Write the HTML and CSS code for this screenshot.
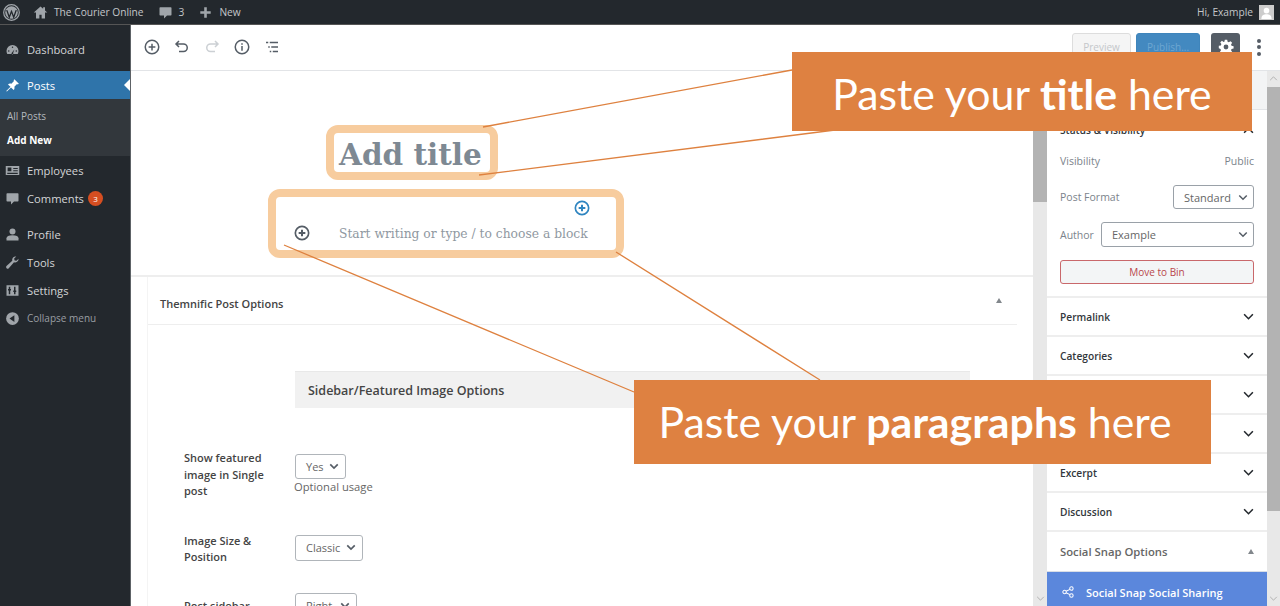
FILE: index.html
```html
<!DOCTYPE html>
<html lang="en">

<head>
    <meta charset="UTF-8">
    <meta name="viewport" content="width=device-width, initial-scale=1.0">
    <title>Add New Post</title>
    <link rel="stylesheet" href="styles.css">
</head>

<body>
    <div class="adminbar">
        <svg class="wp-logo" viewBox="0 0 20 20"><circle cx="10" cy="10" r="9.2" fill="none" stroke="#a0a5aa" stroke-width="1.4"/><circle cx="10" cy="10" r="7.4" fill="#a0a5aa"/><path d="M4.4 7l3 8.6L10 8.6l2.6 7 3-8.6" fill="none" stroke="#23282d" stroke-width="1.5"/><path d="M3 6.6h4.6M8 6.6h4.4M13.2 6.6h3" stroke="#a0a5aa" stroke-width="1"/></svg>
        <svg class="bar-icon home-icon" viewBox="0 0 20 20"><path d="M10 2L1 10h3v8h4.5v-5h3v5H16v-8h3l-3-2.7V3h-2.5v2.1z" fill="#a0a5aa"/></svg>
        <span class="bar-text site-name">The Courier Online</span>
        <svg class="bar-icon" viewBox="0 0 20 20"><path d="M3 3h14a1 1 0 0 1 1 1v9a1 1 0 0 1-1 1h-5l-4 4v-4H3a1 1 0 0 1-1-1V4a1 1 0 0 1 1-1z" fill="#a0a5aa"/></svg>
        <span class="bar-text count">3</span>
        <svg class="bar-icon plus-icon" viewBox="0 0 20 20"><path d="M8 2h4v6h6v4h-6v6H8v-6H2V8h6z" fill="#a0a5aa"/></svg>
        <span class="bar-text">New</span>
        <span class="bar-text howdy">Hi, Example</span>
        <div class="avatar">
            <svg viewBox="0 0 14 14"><circle cx="7" cy="5" r="3" fill="#fff"/><path d="M1.5 14c0-4 2.500-5 5.500-5s5.500 1 5.500 5z" fill="#fff"/></svg>
        </div>
    </div>

    <div class="wrap">
        <div class="sidebar">
            <div class="menu-item">
                <svg class="menu-icon" viewBox="0 0 20 20"><path d="M10 4a8 8 0 0 0-8 8c0 1.500.4 2.800 1 4h14c.6-1.200 1-2.500 1-4a8 8 0 0 0-8-8zm0 2a1 1 0 1 1 0 2 1 1 0 0 1 0-2zM5 11a1 1 0 1 1 0 2 1 1 0 0 1 0-2zm10 0a1 1 0 1 1 0 2 1 1 0 0 1 0-2zm-4.200 3.500a1.200 1.200 0 1 1-1.700-.2l3.400-4.300z" fill="#a0a5aa" fill-rule="evenodd"/></svg>
                <span>Dashboard</span>
            </div>
            <div class="menu-item current">
                <svg class="menu-icon" viewBox="0 0 20 20"><path d="M12.500 1.500l6 6-1.500 1-1-.5-3.500 3.500c.5 2 0 3.500-1 4.500L8 12.500l-5.500 5.500-.8-.7L7.300 11.700 4 8.500c1-1 2.500-1.500 4.500-1L12 4l-.5-1z" fill="#fff"/></svg>
                <span>Posts</span>
            </div>
            <div class="submenu">
                <div class="sub-item">All Posts</div>
                <div class="sub-item active">Add New</div>
            </div>
            <div class="menu-item">
                <svg class="menu-icon" viewBox="0 0 20 20"><path d="M1 4h18v12H1zm2.500 2v5h5V6zM11 6.500v1.500h6V6.500zm0 3v1.500h6V9.500zM3 13v1.500h14V13z" fill="#a0a5aa" fill-rule="evenodd"/></svg>
                <span>Employees</span>
            </div>
            <div class="menu-item">
                <svg class="menu-icon" viewBox="0 0 20 20"><path d="M3 3h14a1 1 0 0 1 1 1v9a1 1 0 0 1-1 1h-5l-4 4v-4H3a1 1 0 0 1-1-1V4a1 1 0 0 1 1-1z" fill="#a0a5aa"/></svg>
                <span>Comments</span>
                <b class="badge">3</b>
            </div>
            <div class="menu-item spaced">
                <svg class="menu-icon" viewBox="0 0 20 20"><circle cx="10" cy="6" r="4" fill="#a0a5aa"/><path d="M2 18v-3c0-2.500 3-4 8-4s8 1.500 8 4v3z" fill="#a0a5aa"/></svg>
                <span>Profile</span>
            </div>
            <div class="menu-item">
                <svg class="menu-icon" viewBox="0 0 20 20"><path d="M18 5.500a4.500 4.500 0 0 1-6 4.200L5 17.500a2 2 0 0 1-3-2.800l7.700-7.100A4.500 4.500 0 0 1 15 2l-2.800 2.700.6 2.500 2.500.6L18 5z" fill="#a0a5aa"/></svg>
                <span>Tools</span>
            </div>
            <div class="menu-item">
                <svg class="menu-icon" viewBox="0 0 20 20"><path d="M2 3h16v14H2zm3 2v3H4v2h1v5h2v-5h1V8H7V5zm7 0v5h-1v2h1v3h2v-3h1v-2h-1V5z" fill="#a0a5aa" fill-rule="evenodd"/></svg>
                <span>Settings</span>
            </div>
            <div class="menu-item collapse">
                <svg class="menu-icon" viewBox="0 0 20 20"><circle cx="10" cy="10" r="8.500" fill="#a0a5aa"/><path d="M12.500 5.500v9L6 10z" fill="#23282d"/></svg>
                <span>Collapse menu</span>
            </div>
        </div>

        <div class="main">
            <div class="toolbar">
                <svg class="tool" viewBox="0 0 24 24"><circle cx="12" cy="12" r="9" fill="none" stroke="#555d66" stroke-width="2"/><path d="M12 7.500v9M7.500 12h9" stroke="#555d66" stroke-width="2"/></svg>
                <svg class="tool" viewBox="0 0 24 24"><path d="M8 4L4 8l4 4M4 8h10a5 5 0 0 1 0 10H8" fill="none" stroke="#555d66" stroke-width="2"/></svg>
                <svg class="tool" viewBox="0 0 24 24"><path d="M16 4l4 4-4 4M20 8H10a5 5 0 0 0 0 10h6" fill="none" stroke="#ccd0d4" stroke-width="2"/></svg>
                <svg class="tool" viewBox="0 0 24 24"><circle cx="12" cy="12" r="9" fill="none" stroke="#555d66" stroke-width="2"/><path d="M12 10.500V17M12 7v2" stroke="#555d66" stroke-width="2"/></svg>
                <svg class="tool" viewBox="0 0 24 24"><path d="M4 6h3M9 6h11M7 12h2M11 12h9M9 18h2M13 18h7" fill="none" stroke="#555d66" stroke-width="2"/></svg>
                <div class="toolbar-right">
                    <button class="btn-preview">Preview</button>
                    <button class="btn-publish">Publish...</button>
                    <div class="btn-gear">
                        <svg viewBox="0 0 20 20"><path d="M8.500 1h3l.5 2.500 1.500.6 2.100-1.400 2.100 2.100-1.400 2.100.6 1.600 2.600.5v3l-2.600.5-.6 1.500 1.400 2.100-2.100 2.100-2.100-1.400-1.500.6-.5 2.500h-3l-.5-2.500-1.500-.6-2.100 1.400-2.100-2.100 1.400-2.100-.6-1.500L1 11.500v-3l2.600-.5.600-1.600-1.400-2.100 2.100-2.100 2.100 1.400L8 3.500zM10 7a3 3 0 1 0 0 6 3 3 0 0 0 0-6z" fill="#fff" fill-rule="evenodd"/></svg>
                    </div>
                    <div class="dots"><i></i><i></i><i></i></div>
                </div>
            </div>

            <div class="work">
                <div class="editor">
                    <h1 class="post-title">Add title</h1>
                    <div class="inserter-row">
                        <svg class="plus-blue" viewBox="0 0 24 24"><circle cx="12" cy="12" r="10" fill="none" stroke="#2f85c0" stroke-width="2.500"/><path d="M12 7v10M7 12h10" stroke="#2f85c0" stroke-width="3"/></svg>
                    </div>
                    <div class="para-row">
                        <svg class="plus-dark" viewBox="0 0 24 24"><circle cx="12" cy="12" r="10" fill="none" stroke="#555d66" stroke-width="2.500"/><path d="M12 7v10M7 12h10" stroke="#555d66" stroke-width="3"/></svg>
                        <span>Start writing or type / to choose a block</span>
                    </div>

                    <div class="metabox-area">
                        <div class="metabox">
                            <div class="metabox-head">
                                <span>Themnific Post Options</span>
                                <i class="tri"></i>
                            </div>
                            <div class="section-title">Sidebar/Featured Image Options</div>
                            <div class="opt-row first">
                                <label>Show featured image in Single post</label>
                                <div>
                                    <div class="small-select yes">Yes <svg viewBox="0 0 12 8"><path d="M1.500 1.500L6 6l4.500-4.500" fill="none" stroke="#555d66" stroke-width="2"/></svg></div>
                                    <div class="hint">Optional usage</div>
                                </div>
                            </div>
                            <div class="opt-row second">
                                <label>Image Size &amp; Position</label>
                                <div class="small-select classic">Classic <svg viewBox="0 0 12 8"><path d="M1.500 1.500L6 6l4.500-4.500" fill="none" stroke="#555d66" stroke-width="2"/></svg></div>
                            </div>
                            <div class="opt-row third">
                                <label>Post sidebar</label>
                                <div class="small-select right">Right <svg viewBox="0 0 12 8"><path d="M1.500 1.500L6 6l4.500-4.500" fill="none" stroke="#555d66" stroke-width="2"/></svg></div>
                            </div>
                        </div>
                    </div>
                </div>

                <div class="scrollbar">
                    <div class="sb-thumb editor-thumb"></div>
                    <svg class="sb-arrow" viewBox="0 0 10 6"><path d="M1 1l4 4 4-4" fill="none" stroke="#a6a6a6" stroke-width="1"/></svg>
                </div>

                <div class="panel">
                    <div class="panel-tabs"></div>
                    <div class="panel-section status">
                        <div class="panel-row-head">
                            <b>Status &amp; Visibility</b>
                            <svg class="chev" viewBox="0 0 12 8"><path d="M1 6.500L6 1.500l5 5" fill="none" stroke="#23282d" stroke-width="1.800"/></svg>
                        </div>
                        <div class="field vis"><span>Visibility</span><span>Public</span></div>
                        <div class="field fmt">
                            <span>Post Format</span>
                            <div class="select std">Standard <svg viewBox="0 0 12 8"><path d="M1.500 1.500L6 6l4.500-4.500" fill="none" stroke="#555d66" stroke-width="1.800"/></svg></div>
                        </div>
                        <div class="field auth">
                            <span>Author</span>
                            <div class="select who">Example <svg viewBox="0 0 12 8"><path d="M1.500 1.500L6 6l4.500-4.500" fill="none" stroke="#555d66" stroke-width="1.800"/></svg></div>
                        </div>
                        <button class="btn-bin">Move to Bin</button>
                    </div>
                    <div class="panel-line"><b>Permalink</b><svg class="chev" viewBox="0 0 12 8"><path d="M1 1.500l5 5 5-5" fill="none" stroke="#23282d" stroke-width="1.800"/></svg></div>
                    <div class="panel-line"><b>Categories</b><svg class="chev" viewBox="0 0 12 8"><path d="M1 1.500l5 5 5-5" fill="none" stroke="#23282d" stroke-width="1.800"/></svg></div>
                    <!-- these two rows have their labels hidden behind the callout -->
                    <div class="panel-line"><b></b><svg class="chev" viewBox="0 0 12 8"><path d="M1 1.500l5 5 5-5" fill="none" stroke="#23282d" stroke-width="1.800"/></svg></div>
                    <div class="panel-line"><b></b><svg class="chev" viewBox="0 0 12 8"><path d="M1 1.500l5 5 5-5" fill="none" stroke="#23282d" stroke-width="1.800"/></svg></div>
                    <div class="panel-line"><b>Excerpt</b><svg class="chev" viewBox="0 0 12 8"><path d="M1 1.500l5 5 5-5" fill="none" stroke="#23282d" stroke-width="1.800"/></svg></div>
                    <div class="panel-line"><b>Discussion</b><svg class="chev" viewBox="0 0 12 8"><path d="M1 1.500l5 5 5-5" fill="none" stroke="#23282d" stroke-width="1.800"/></svg></div>
                    <div class="panel-line snap"><b>Social Snap Options</b><i class="tri"></i></div>
                    <div class="panel-share">
                        <svg viewBox="0 0 14 14"><circle cx="3" cy="7" r="2" fill="none" stroke="#fff" stroke-width="1.200"/><circle cx="11" cy="3" r="2" fill="none" stroke="#fff" stroke-width="1.200"/><circle cx="11" cy="11" r="2" fill="none" stroke="#fff" stroke-width="1.200"/><path d="M4.800 6.100l4.400-2.200M4.800 7.900l4.400 2.200" stroke="#fff" stroke-width="1.200"/></svg>
                        <span>Social Snap Social Sharing</span>
                    </div>
                </div>

                <div class="scrollbar outer">
                    <svg class="sb-arrow up" viewBox="0 0 10 6"><path d="M1 5l4-4 4 4" fill="none" stroke="#a6a6a6" stroke-width="1"/></svg>
                    <div class="sb-thumb outer-thumb"></div>
                    <svg class="sb-arrow" viewBox="0 0 10 6"><path d="M1 1l4 4 4-4" fill="none" stroke="#a6a6a6" stroke-width="1"/></svg>
                </div>
            </div>
        </div>
    </div>

    <!-- annotations drawn on top of the screenshot -->
    <div class="mark mark-title"></div>
    <div class="mark mark-para"></div>
    <svg class="lines" viewBox="0 0 1280 606">
        <path d="M483 127L792 70M479 175L835 130M284 245L634 392M616 252L820 380" stroke="#de813f" stroke-width="1.300" fill="none"/>
    </svg>
    <div class="callout callout-title">Paste your <b>title</b> here</div>
    <div class="callout callout-para">Paste your <b>paragraphs</b> here</div>
</body>

</html>
```

FILE: styles.css
```css
* {
    margin: 0;
    padding: 0;
    box-sizing: border-box;
    font-family: "Open Sans", Arial, sans-serif;
}

body {
    width: 1280px;
    height: 606px;
    overflow: hidden;
    background-color: #fff;
    display: flex;
    flex-direction: column;
}

/* top bar */
.adminbar {
    height: 25px;
    flex: none;
    background-color: #23282d;
    border-bottom: 1px solid #555;
    display: flex;
    align-items: center;
    padding: 0 6px 0 3px;
}

.wp-logo {
    width: 17px;
    height: 17px;
    margin-right: 13px;
}

.bar-icon {
    width: 15px;
    height: 15px;
    margin-right: 6px;
}

.home-icon {
    margin-right: 6px;
}

.plus-icon {
    width: 13px;
    height: 13px;
    margin-right: 7px;
}

.bar-text {
    color: #c3c6c9;
    font-size: 10.200px;
}

.site-name {
    margin-right: 14px;
}

.count {
    margin-right: 15px;
}

.howdy {
    margin-left: auto;
    margin-right: 6px;
}

.avatar {
    width: 15px;
    height: 15px;
    background-color: #ccc;
    padding: 1px;
    display: flex;
}

/* left menu */
.wrap {
    flex: 1;
    display: flex;
    min-height: 0;
}

.sidebar {
    width: 131px;
    flex: none;
    background-color: #23282d;
    border-right: 1px solid #5d6266;
    padding-top: 10px;
}

.menu-item {
    height: 28px;
    display: flex;
    align-items: center;
    padding-left: 5px;
    color: #d3d5d7;
    font-size: 11.200px;
}

.menu-icon {
    width: 15px;
    height: 15px;
    margin-right: 7px;
}

.menu-item.current {
    background-color: #2f74aa;
    color: #fff;
    margin-top: 8px;
    position: relative;
}

.menu-item.current::after {
    content: "";
    position: absolute;
    right: 0;
    top: 8px;
    border: 6px solid transparent;
    border-left: 0;
    border-right-color: #fff;
}

.submenu {
    background-color: #32373c;
    padding: 5px 7px 4px;
}

.sub-item {
    height: 24px;
    line-height: 24px;
    font-size: 10px;
    color: #b4b9be;
}

.sub-item.active {
    color: #fff;
    font-weight: 700;
}

.badge {
    width: 15px;
    height: 15px;
    border-radius: 50%;
    margin-left: 4px;
    background-color: #d54e21;
    color: #fff;
    font-size: 8px;
    font-weight: 400;
    text-align: center;
    line-height: 15px;
}

.menu-item.spaced {
    margin-top: 8px;
}

.menu-item.collapse {
    color: #9a9ea3;
    font-size: 10px;
}

/* editor toolbar */
.main {
    flex: 1;
    display: flex;
    flex-direction: column;
    min-width: 0;
}

.toolbar {
    height: 46px;
    flex: none;
    border-bottom: 1px solid #e2e4e7;
    display: flex;
    align-items: center;
    padding: 0 12px 1px 12px;
    gap: 12px;
}

.tool {
    width: 18px;
    height: 18px;
}

.toolbar-right {
    margin-left: auto;
    display: flex;
    align-items: center;
}

.btn-preview {
    width: 59px;
    height: 28px;
    background-color: #f5f5f5;
    border: 1px solid #ddd;
    border-radius: 3px;
    color: #c4c7ca;
    font-size: 10px;
    margin-right: 5px;
}

.btn-publish {
    width: 64px;
    height: 28px;
    background-color: #4389c0;
    border: 1px solid #3f85bb;
    border-radius: 3px;
    color: #6ea7d2;
    font-size: 10px;
    margin-right: 11px;
}

.btn-gear {
    width: 29px;
    height: 28px;
    background-color: #555d66;
    border-radius: 3px;
    display: flex;
    align-items: center;
    justify-content: center;
}

.btn-gear svg {
    width: 16px;
    height: 16px;
}

.dots {
    width: 4px;
    margin-left: 17px;
    margin-right: 7px;
    display: flex;
    flex-direction: column;
    gap: 2.500px;
}

.dots i {
    width: 4px;
    height: 4px;
    border-radius: 50%;
    background-color: #555d66;
}

/* editor area */
.work {
    flex: 1;
    display: flex;
    min-height: 0;
}

.editor {
    flex: 1;
    min-width: 0;
    padding-top: 64px;
    overflow: hidden;
}

.post-title {
    margin-left: 208px;
    height: 40px;
    line-height: 40px;
    font-family: "DejaVu Serif", serif;
    font-size: 29.500px;
    font-weight: 700;
    color: #7e8993;
}

.inserter-row {
    margin-top: 25px;
    padding-left: 443px;
    height: 16px;
}

.plus-blue,
.plus-dark {
    width: 16px;
    height: 16px;
    display: block;
}

.para-row {
    margin-top: 9px;
    padding-left: 163px;
    height: 16px;
    display: flex;
    align-items: center;
    gap: 29px;
    font-size: 12.300px;
    color: #8f98a1;
}

.para-row span {
    font-family: "DejaVu Serif", serif;
    padding-top: 1px;
}

.metabox-area {
    margin-top: 34px;
    border-top: 2px solid #eeeeee;
    padding: 0 16px;
}

.metabox {
    border-left: 1px solid #f4f4f4;
    height: 340px;
}

.metabox-head {
    height: 48px;
    display: flex;
    align-items: center;
    justify-content: space-between;
    padding: 5px 15px 0 12px;
    border-bottom: 1px solid #eeeeee;
    font-size: 11px;
    font-weight: 600;
    color: #444;
}

.metabox-head .tri {
    margin-top: -5px;
}

.tri {
    width: 0;
    height: 0;
    border: 3.500px solid transparent;
    border-top: 0;
    border-bottom: 5px solid #82878c;
}

.section-title {
    margin: 46px 47px 0 147px;
    height: 37px;
    line-height: 37px;
    padding-left: 13px;
    background-color: #f1f1f1;
    border-top: 1px solid #e8e8e8;
    font-size: 12.500px;
    font-weight: 600;
    color: #444;
}

.opt-row {
    display: grid;
    grid-template-columns: 111px 1fr;
    padding-left: 36px;
}

.opt-row label {
    font-size: 11px;
    font-weight: 600;
    color: #444;
    line-height: 16.500px;
    width: 90px;
}

.opt-row.first {
    margin-top: 46px;
}

.opt-row.first label {
    margin-top: -4px;
}

.opt-row.second {
    margin-top: 35px;
}

.opt-row.second label {
    margin-top: -2px;
}

.opt-row.third {
    margin-top: 27px;
}

.opt-row.third label {
    margin-top: 5px;
}

.small-select {
    height: 25px;
    border: 1px solid #b0b5ba;
    border-radius: 3px;
    display: flex;
    align-items: center;
    justify-content: space-between;
    padding: 0 6px 0 10px;
    font-size: 11px;
    color: #666;
}

.small-select svg {
    width: 10px;
    height: 7px;
}

.small-select.yes {
    width: 51px;
}

.small-select.classic {
    width: 68px;
    height: 26px;
}

.small-select.right {
    width: 62px;
}

.hint {
    margin-left: -1px;
    font-size: 11.200px;
    color: #666;
    line-height: 16px;
}

/* scroll bars */
.scrollbar {
    width: 14px;
    flex: none;
    background-color: #e8e8e8;
    display: flex;
    flex-direction: column;
    align-items: center;
}

.sb-thumb {
    width: 100%;
    background-color: #b3b3b3;
}

.editor-thumb {
    height: 131px;
}

.outer-thumb {
    height: 424px;
    margin-top: 6px;
}

.sb-arrow {
    width: 9px;
    height: 5px;
    margin-top: auto;
    margin-bottom: 5px;
}

.sb-arrow.up {
    margin-top: 5px;
    margin-bottom: 0;
}

.scrollbar.outer {
    width: 13px;
}

/* settings panel */
.panel {
    width: 220px;
    flex: none;
    display: flex;
    flex-direction: column;
    overflow: hidden;
    font-size: 11px;
    color: #555d66;
}

.panel b {
    font-weight: 600;
    color: #32373c;
    font-size: 10.200px;
}

.panel-tabs {
    height: 39px;
    flex: none;
    background-color: #f3f4f5;
    border-bottom: 1px solid #e2e4e7;
}

.panel-section.status {
    height: 188px;
    flex: none;
    padding: 0 13px;
    border-bottom: 2px solid #eeeeee;
}

.panel-row-head {
    height: 40px;
    display: flex;
    align-items: center;
    justify-content: space-between;
}

.chev {
    width: 11px;
    height: 7px;
}

.field {
    display: flex;
    align-items: center;
    justify-content: space-between;
    font-size: 10.500px;
    color: #7b838b;
}

.field.vis {
    height: 22px;
}

.field.fmt {
    margin-top: 13px;
    height: 24px;
}

.field.auth {
    margin-top: 13px;
    height: 25px;
}

.select {
    height: 100%;
    border: 1px solid #9aa1a8;
    border-radius: 3px;
    display: flex;
    align-items: center;
    justify-content: space-between;
    padding: 0 5px 0 10px;
    font-size: 11px;
    color: #666;
}

.select svg {
    width: 10px;
    height: 7px;
}

.select.std {
    width: 81px;
}

.select.who {
    width: 153px;
}

.btn-bin {
    display: block;
    width: 100%;
    height: 24px;
    margin-top: 13px;
    background-color: #f3f5f6;
    border: 1px solid #c9686b;
    border-radius: 3px;
    color: #b9484c;
    font-size: 10px;
}

.panel-line {
    height: 39px;
    flex: none;
    padding: 0 13px;
    display: flex;
    align-items: center;
    justify-content: space-between;
    border-bottom: 2px solid #eeeeee;
}

.panel-line.snap {
    height: 40px;
    border-bottom: 1px solid #d9dee6;
}

.panel-line.snap b {
    color: #666;
    font-size: 11.300px;
}

.panel-share {
    flex: 1;
    background-color: #5b87dc;
    color: #fff;
    display: flex;
    align-items: flex-start;
    padding: 13px 0 0 15px;
    font-size: 11px;
    font-weight: 600;
}

.panel-share svg {
    width: 12px;
    height: 12px;
    margin: 1px 12px 0 0;
}

/* annotations */
.lines {
    position: absolute;
    left: 0;
    top: 0;
    width: 1280px;
    height: 606px;
}

.mark {
    position: absolute;
    border: 8px solid #f7cc9e;
    border-radius: 12px;
}

.mark-title {
    left: 326px;
    top: 125px;
    width: 172px;
    height: 55px;
}

.mark-para {
    left: 268px;
    top: 189px;
    width: 356px;
    height: 69px;
}

.callout {
    position: absolute;
    background-color: #de8141;
    color: #fff;
    font-family: Lato, sans-serif;
    font-size: 42.800px;
    display: flex;
    align-items: center;
    justify-content: center;
    white-space: pre;
}

.callout b {
    font-family: Lato, sans-serif;
}

.callout-title {
    left: 792px;
    top: 52px;
    width: 460px;
    height: 79px;
    padding-top: 4px;
}

.callout-para {
    left: 634px;
    top: 380px;
    width: 577px;
    height: 84px;
    padding: 0 15px 2px 0;
}
```
